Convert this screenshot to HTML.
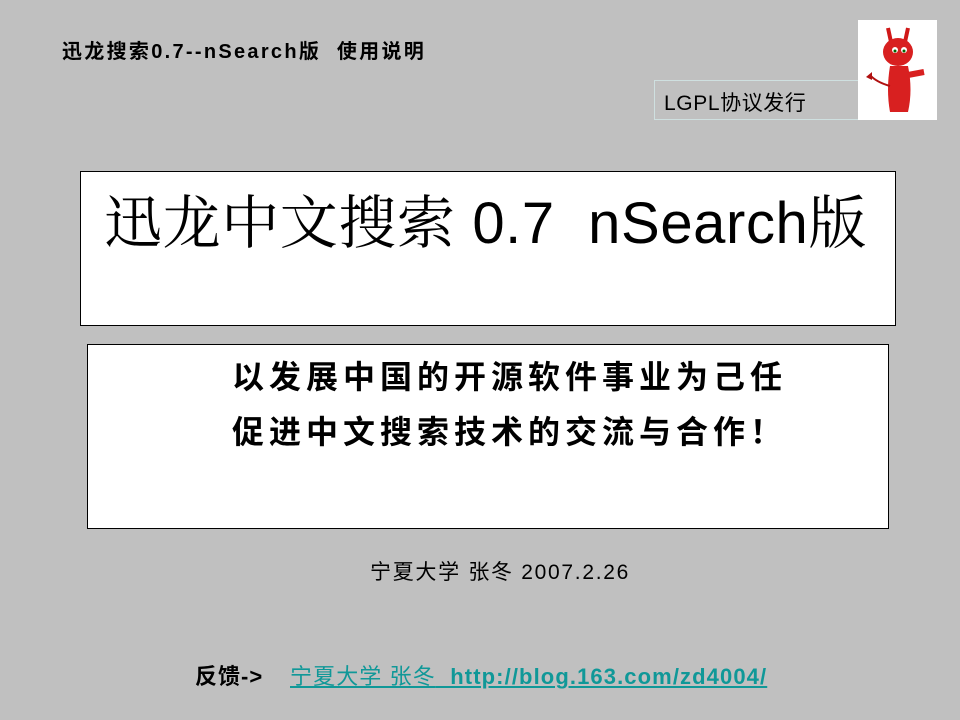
<!DOCTYPE html>
<html><head><meta charset="utf-8"><style>
body{margin:0;width:960px;height:720px;background:#c0c0c0;position:relative;overflow:hidden;font-family:"Liberation Sans","Noto Sans CJK SC",sans-serif;}
.a{position:absolute;white-space:nowrap;}
</style></head><body>
<div class="a" style="left:62px;top:35px;font-size:20px;font-weight:bold;letter-spacing:2.3px;">迅龙搜索0.7--nSearch版&nbsp; 使用说明</div>
<div class="a" style="left:654px;top:80px;width:232px;height:38px;border:1px solid #cfe0e0;"></div>
<div class="a" style="left:664px;top:87px;font-size:21px;letter-spacing:0.6px;">LGPL协议发行</div>
<div class="a" style="left:858px;top:20px;width:79px;height:100px;background:#fff;">
<svg width="79" height="100" viewBox="0 0 79 100">
<path d="M30 8 L33 22 M50 8 L47 22" stroke="#d01818" stroke-width="4"/>
<ellipse cx="40" cy="32" rx="15" ry="14" fill="#d82020"/>
<circle cx="37" cy="30" r="3" fill="#fff"/><circle cx="46" cy="30" r="3" fill="#fff"/>
<circle cx="37" cy="31" r="1.5" fill="#060"/><circle cx="46" cy="31" r="1.5" fill="#060"/>
<path d="M32 46 Q28 70 32 92 L50 92 Q55 70 50 46 Z" fill="#d82020"/>
<path d="M50 55 L66 52" stroke="#d82020" stroke-width="6"/>
<path d="M32 66 Q18 62 12 55" stroke="#b01010" stroke-width="2" fill="none"/>
<path d="M8 57 L14 52 L14 60Z" fill="#b01010"/>
</svg></div>
<div class="a" style="left:80px;top:171px;width:814px;height:153px;background:#fff;border:1px solid #000;"></div>
<div class="a" style="left:104px;top:176px;font-size:58px;letter-spacing:0.6px;"><span style="font-family:'Noto Serif CJK SC',serif;">迅龙中文搜索</span> 0.7&nbsp; nSearch<span style="font-family:'Noto Serif CJK SC',serif;">版</span></div>
<div class="a" style="left:87px;top:344px;width:800px;height:183px;background:#fff;border:1px solid #000;"></div>
<div class="a" style="left:232px;top:350px;font-size:32px;font-weight:bold;line-height:55px;letter-spacing:5px;">以发展中国的开源软件事业为己任<br>促进中文搜索技术的交流与合作！</div>
<div class="a" style="left:370px;top:556px;font-size:21px;letter-spacing:1.7px;">宁夏大学 张冬 2007.2.26</div>
<div class="a" style="left:195px;top:659px;font-size:22px;font-weight:bold;letter-spacing:1px;">反馈-&gt;</div>
<div class="a" style="left:290px;top:659px;font-size:22px;font-weight:bold;color:#109898;text-decoration:underline;letter-spacing:1.1px;"><span style="font-weight:normal">宁夏大学 张冬</span>&nbsp; http://blog.163.com/zd4004/</div>
</body></html>
